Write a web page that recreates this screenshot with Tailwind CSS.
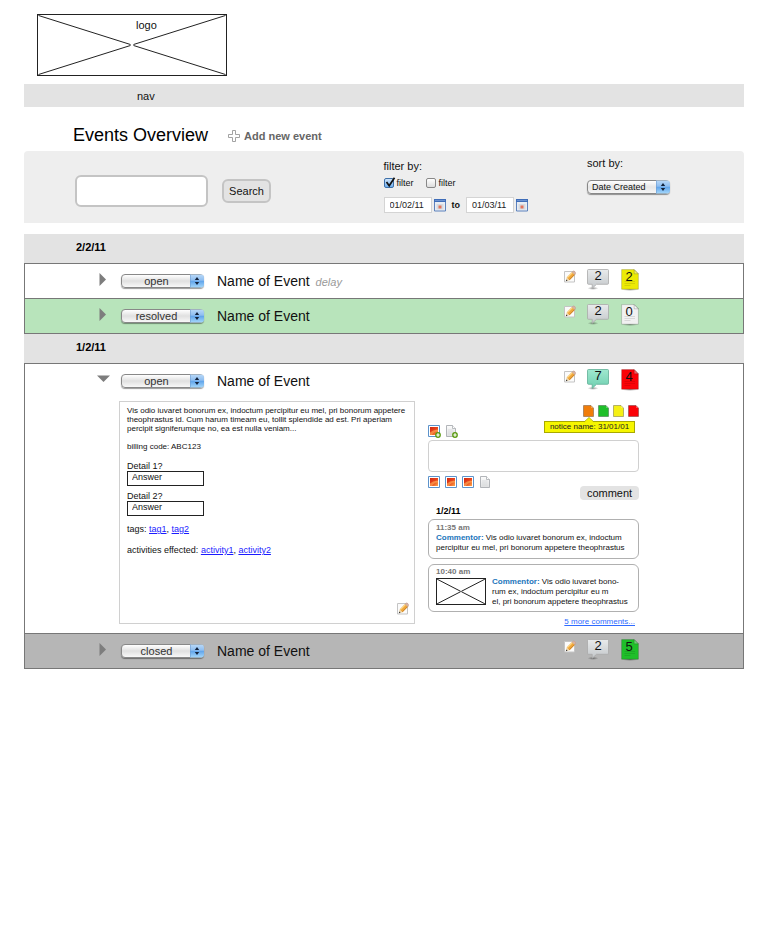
<!DOCTYPE html>
<html lang="en">
<head>
<meta charset="utf-8">
<meta name="viewport" content="width=device-width, initial-scale=1">
<title>Events Overview</title>
<script src="https://cdn.jsdelivr.net/npm/@tailwindcss/browser@4"></script>
</head>
<body class="min-h-screen bg-white px-6 font-['Liberation_Sans',Arial,sans-serif] text-[11px] leading-[14px] text-[#111]">

<!-- Shared icon definitions -->
<svg width="0" height="0" class="absolute" aria-hidden="true">
  <defs>
    <linearGradient id="gGrey" x1="0" y1="0" x2="0" y2="1"><stop offset="0" stop-color="#e9ebec"/><stop offset="1" stop-color="#c3c7ca"/></linearGradient>
    <linearGradient id="gTeal" x1="0" y1="0" x2="0" y2="1"><stop offset="0" stop-color="#9fe8cf"/><stop offset="1" stop-color="#6fcfb0"/></linearGradient>
    <linearGradient id="gBlue" x1="0" y1="0" x2="0" y2="1"><stop offset="0" stop-color="#b9d9f8"/><stop offset=".45" stop-color="#8dbdf0"/><stop offset=".5" stop-color="#5fa3ea"/><stop offset="1" stop-color="#a5d8fb"/></linearGradient>
    <linearGradient id="gPhoto" x1="0" y1="0" x2="1" y2="1"><stop offset="0" stop-color="#cf2a12"/><stop offset=".5" stop-color="#e8431c"/><stop offset="1" stop-color="#fca94a"/></linearGradient>
    <linearGradient id="gPage" x1="0" y1="0" x2="0" y2="1"><stop offset="0" stop-color="#fdfdfd"/><stop offset="1" stop-color="#dedfe0"/></linearGradient>
    <radialGradient id="gShade"><stop offset="0" stop-color="#000" stop-opacity=".4"/><stop offset="1" stop-color="#000" stop-opacity="0"/></radialGradient>
  </defs>
  <symbol id="pencil" viewBox="0 0 12 13">
    <path d="M.5 1.5h10v10.5h-10z" fill="#fbfbfb" stroke="#c4c4c4"/>
    <path d="M1.800 11.300l.9-3.900 2.900 2.800z" fill="#ecd3a4"/><path d="M1.800 11.300l.5-1.800 1.300 1.300z" fill="#333"/>
    <path d="M2.700 7.400L8 2l2.900 2.800-5.300 5.400z" fill="#f0a73a"/>
    <path d="M3.400 7.700L8.700 2.400" stroke="#fbd889" stroke-width="1.100"/><path d="M5.400 9.800l5.200-5.200" stroke="#b9701d" stroke-width=".7"/>
    <path d="M8 2l1-1c1-.7 3.300 1.500 2.600 2.700l-.7 1.100z" fill="#d9b3a0" stroke="#a88" stroke-width=".3"/>
  </symbol>
  <symbol id="bubble" viewBox="0 0 22 21">
    <ellipse cx="6" cy="19.300" rx="5.500" ry="1.600" fill="url(#gShade)" stroke="none"/>
    <path d="M1.500 .5h19q1 0 1 1v12.800q0 1-1 1h-11l-4.300 4v-4h-3.700q-1 0-1-1v-12.800q0-1 1-1z" stroke-width=".8"/>
  </symbol>
  <symbol id="page" viewBox="0 0 18 22">
    <ellipse cx="9" cy="20.500" rx="9" ry="1.500" fill="url(#gShade)" stroke="none"/>
    <path d="M.6 .6h12.600l4.200 4.200v15.400h-16.800z" stroke="#000" stroke-opacity=".22" stroke-width=".8"/>
    <path d="M13.200 .6v4.200h4.200z" fill="#fff" fill-opacity=".35" stroke="#000" stroke-opacity=".3" stroke-width=".6"/>
    <path d="M3.500 12.500h10.500M3.500 14.500h10.500M3.500 16.500h6" stroke="#000" stroke-opacity=".1"/>
  </symbol>
  <symbol id="flag" viewBox="0 0 11 12">
    <path d="M.5 .5h7.500l2.500 2.500v8.500h-10z" stroke="#000" stroke-opacity=".28"/>
    <path d="M8 .5v2.500h2.500z" fill="#fff" fill-opacity=".3"/>
  </symbol>
  <symbol id="photo" viewBox="0 0 12 12">
    <path d="M.5 .5h11v11h-11z" fill="#fff" stroke="#5d93cb"/>
    <path d="M2 2h8v8h-8z" fill="url(#gPhoto)"/>
    <path d="M2 7.500q4-3.500 8-2.500v1.500q-4-.5-6 3.500h-2z" fill="#fdb65c" fill-opacity=".6"/>
  </symbol>
  <symbol id="doc" viewBox="0 0 12 12">
    <path d="M1.500 .5h6l3 3v8h-9z" fill="url(#gPage)" stroke="#a9adb1" stroke-width=".9"/>
    <path d="M7.500 .5v3h3" fill="#fff" stroke="#a9adb1" stroke-width=".8"/>
    <path d="M3 5h5.500M3 7h5.500M3 9h5.500" stroke="#d3d5d7" stroke-width=".7"/>
  </symbol>
  <symbol id="plusdot" viewBox="0 0 6 6">
    <circle cx="3" cy="3" r="2.900" fill="#5a9a10"/><path d="M3 1.300v3.400M1.300 3h3.400" stroke="#fff" stroke-width="1.200"/>
  </symbol>
  <symbol id="calendar" viewBox="0 0 12 13">
    <path d="M.5 .5h11v11.500h-11z" fill="#e9edf3" stroke="#5d82bd"/>
    <path d="M0 0h12v3h-12z" fill="#3f6db8"/><path d="M1 1h10v.7h-10z" fill="#7ea2da"/>
    <path d="M2.500 5h7v5.500h-7z" fill="#d6dae0"/><path d="M4.500 6.500h3v3h-3z" fill="#e3745c"/>
  </symbol>
  <symbol id="stepper" viewBox="0 0 14 13">
    <path d="M0 0h11q3 0 3 3v7q0 3-3 3h-11z" fill="url(#gBlue)"/>
    <path d="M.5 0v13" stroke="#6f9cd0" stroke-opacity=".6"/>
    <path d="M7 2.500l2.200 2.900h-4.400zM7 10.500l2.200-2.900h-4.400z" fill="#13233c"/>
  </symbol>
  <symbol id="crossbox" viewBox="0 0 189 62" preserveAspectRatio="none">
    <path d="M.5 .5L93 30.500M96 30.500L188.500 .5M.5 61.500L93 31.500M96 31.500L188.500 61.500" fill="none" stroke="#222" vector-effect="non-scaling-stroke"/>
  </symbol>
</svg>

<header>
  <div class="pt-[14px] pl-[13px]">
    <a href="#" class="relative block h-[62px] w-[190px] border border-[#222]">
      <svg class="absolute inset-0 h-full w-full" aria-hidden="true"><use href="#crossbox"/></svg>
      <span class="relative block pt-[3px] pl-[98px]">logo</span>
    </a>
  </div>
  <nav class="mt-2 flex h-[23px] items-center bg-[#e3e3e3] pl-[113px]"><a href="#">nav</a></nav>
</header>

<main>
  <div class="flex h-11 items-center gap-5 pt-[11px] pl-[49px]">
    <h1 class="text-[18px] leading-[22px] text-black">Events Overview</h1>
    <button type="button" class="flex items-center gap-1 pt-[2px] font-bold text-[#666]">
      <svg width="12" height="12" viewBox="0 0 12 12" aria-hidden="true"><path d="M4.500 .5h3v4h4v3h-4v4h-3v-4h-4v-3h4z" fill="#fff" stroke="#999" stroke-width=".9"/></svg>
      Add new event
    </button>
  </div>

  <form class="flex h-[72px] items-start rounded-t bg-[#eee] pr-[74px] pl-[51px]">
    <div class="flex items-center gap-[14px] pt-6">
      <input type="search" aria-label="Search events" class="h-8 w-[133px] appearance-none rounded-md border-2 border-[#c4c4c4] bg-white px-2 outline-none">
      <button type="button" class="h-6 w-[49px] rounded-md border-2 border-[#c4c4c4] bg-[#e3e3e3]">Search</button>
    </div>
    <fieldset class="ml-auto pt-2">
      <legend class="contents">filter by:</legend>
      <div class="mt-[3px] flex items-center gap-3 text-[9px]">
        <label class="relative flex items-center gap-[3px]">
          <input type="checkbox" checked class="peer h-[10px] w-[10px] appearance-none rounded-xs border border-[#777] bg-gradient-to-b from-white to-[#ddd] checked:border-[#3d6fa8] checked:from-[#cfe4fa] checked:to-[#6fb0f0]">
          <svg class="absolute top-[1px] left-[1px] hidden peer-checked:block" width="11" height="11" viewBox="0 0 11 11" aria-hidden="true"><path d="M1.500 5l2.700 3.700L9.500 .8" fill="none" stroke="#111" stroke-width="1.700"/></svg>
          filter
        </label>
        <label class="flex items-center gap-[3px]">
          <input type="checkbox" class="h-[10px] w-[10px] appearance-none rounded-xs border border-[#888] bg-gradient-to-b from-white to-[#ddd]">
          filter
        </label>
      </div>
      <div class="mt-[7px] flex items-center text-[9px]">
        <input type="text" value="01/02/11" aria-label="From date" class="h-4 w-12 border border-[#d4d4d4] bg-white pl-[5px] text-[#222]">
        <button type="button" aria-label="Pick start date" class="ml-[2px]"><svg width="12" height="13"><use href="#calendar"/></svg></button>
        <b class="mx-[6px]">to</b>
        <input type="text" value="01/03/11" aria-label="To date" class="h-4 w-12 border border-[#d4d4d4] bg-white pl-[5px] text-[#222]">
        <button type="button" aria-label="Pick end date" class="ml-[2px]"><svg width="12" height="13"><use href="#calendar"/></svg></button>
      </div>
    </fieldset>
    <div class="ml-[59px] pt-[5px]">
      <label for="sort" class="block">sort by:</label>
      <div class="relative mt-[10px] w-[83px]">
        <select id="sort" class="block h-[14px] w-full appearance-none rounded border border-[#888] bg-gradient-to-b from-white via-[#e6e6e6] to-[#f6f6f6] pl-1 text-[9px] leading-[12px] shadow-[0_1px_1px_#0006]"><option>Date Created</option></select>
        <svg class="pointer-events-none absolute top-0 right-0" width="14" height="14"><use href="#stepper"/></svg>
      </div>
    </div>
  </form>

  <h2 class="mt-[11px] flex h-[29px] items-center bg-[#e3e3e3] pb-[3px] pl-[52px] font-bold text-black">2/2/11</h2>
  <ul class="border border-[#777]">
    <li class="flex h-[35px] items-center border-b border-[#777] pr-[104px] pb-[1px] pl-[74px]">
      <button type="button" aria-label="Expand event" class="w-5 pb-[3px]"><svg width="8" height="13" viewBox="0 0 8 13"><path d="M.5 0l6.500 6.500L.5 13z" fill="#7d7d7d"/></svg></button>
      <div class="relative ml-[2px] w-[83px]">
        <select aria-label="Status" class="block h-[14px] w-full appearance-none rounded border border-[#888] bg-gradient-to-b from-white via-[#e0e0e0] to-[#f8f8f8] pr-3 text-center leading-[12px] text-[#333] shadow-[0_1px_1px_#0006] [text-align-last:center]"><option>open</option></select>
        <svg class="pointer-events-none absolute top-0 right-0" width="14" height="14"><use href="#stepper"/></svg>
      </div>
      <h3 class="ml-[13px] text-[14px] leading-[18px]">Name of Event</h3>
      <i class="ml-[6px] pt-[2px] text-[#999]">delay</i>
      <div class="ml-auto flex items-center pb-[2px] text-[13px] leading-[13px]">
        <button type="button" aria-label="Edit event" class="pb-[6px]"><svg width="12" height="13"><use href="#pencil"/></svg></button>
        <button type="button" aria-label="Comments" class="relative ml-[11px] h-[21px] w-[22px]"><svg class="absolute inset-0" width="22" height="21"><use href="#bubble" fill="url(#gGrey)" stroke="#aaa"/></svg><span class="absolute inset-x-0 top-0">2</span></button>
        <button type="button" aria-label="Notices" class="relative ml-3 h-[22px] w-[18px]"><svg class="absolute inset-0" width="18" height="22"><use href="#page" fill="#ecea06"/></svg><span class="absolute inset-x-0 top-[1px] pr-[2px]">2</span></button>
      </div>
    </li>
    <li class="flex h-[34px] items-center bg-[#b8e4bb] pr-[104px] pb-[1px] pl-[74px]">
      <button type="button" aria-label="Expand event" class="w-5 pb-[3px]"><svg width="8" height="13" viewBox="0 0 8 13"><path d="M.5 0l6.500 6.500L.5 13z" fill="#7d7d7d"/></svg></button>
      <div class="relative ml-[2px] w-[83px]">
        <select aria-label="Status" class="block h-[14px] w-full appearance-none rounded border border-[#888] bg-gradient-to-b from-white via-[#e0e0e0] to-[#f8f8f8] pr-3 text-center leading-[12px] text-[#333] shadow-[0_1px_1px_#0006] [text-align-last:center]"><option>resolved</option></select>
        <svg class="pointer-events-none absolute top-0 right-0" width="14" height="14"><use href="#stepper"/></svg>
      </div>
      <h3 class="ml-[13px] text-[14px] leading-[18px]">Name of Event</h3>
      <div class="ml-auto flex items-center pb-[2px] text-[13px] leading-[13px]">
        <button type="button" aria-label="Edit event" class="pb-[6px]"><svg width="12" height="13"><use href="#pencil"/></svg></button>
        <button type="button" aria-label="Comments" class="relative ml-[11px] h-[21px] w-[22px]"><svg class="absolute inset-0" width="22" height="21"><use href="#bubble" fill="url(#gGrey)" stroke="#aaa"/></svg><span class="absolute inset-x-0 top-0">2</span></button>
        <button type="button" aria-label="Notices" class="relative ml-3 h-[22px] w-[18px]"><svg class="absolute inset-0" width="18" height="22"><use href="#page" fill="#f1f1f1"/></svg><span class="absolute inset-x-0 top-[1px] pr-[2px]">0</span></button>
      </div>
    </li>
  </ul>

  <h2 class="flex h-[29px] items-center bg-[#e3e3e3] pb-[3px] pl-[52px] font-bold text-black">1/2/11</h2>
  <ul class="border border-[#777]">
    <li class="border-b border-[#777] pb-[6px]">
      <div class="flex h-[34px] items-center pr-[104px] pb-[1px] pl-[72px]">
        <button type="button" aria-label="Collapse event" class="w-[22px] pb-1"><svg width="13" height="7" viewBox="0 0 13 7"><path d="M0 .5h13L6.500 7z" fill="#7d7d7d"/></svg></button>
        <div class="relative ml-[2px] w-[83px]">
          <select aria-label="Status" class="block h-[14px] w-full appearance-none rounded border border-[#888] bg-gradient-to-b from-white via-[#e0e0e0] to-[#f8f8f8] pr-3 text-center leading-[12px] text-[#333] shadow-[0_1px_1px_#0006] [text-align-last:center]"><option>open</option></select>
          <svg class="pointer-events-none absolute top-0 right-0" width="14" height="14"><use href="#stepper"/></svg>
        </div>
        <h3 class="ml-[13px] text-[14px] leading-[18px]">Name of Event</h3>
        <div class="ml-auto flex items-center pb-[2px] text-[13px] leading-[13px]">
          <button type="button" aria-label="Edit event" class="pb-[6px]"><svg width="12" height="13"><use href="#pencil"/></svg></button>
          <button type="button" aria-label="Comments" class="relative ml-[11px] h-[21px] w-[22px]"><svg class="absolute inset-0" width="22" height="21"><use href="#bubble" fill="url(#gTeal)" stroke="#5fae95"/></svg><span class="absolute inset-x-0 top-0">7</span></button>
          <button type="button" aria-label="Notices" class="relative ml-3 h-[22px] w-[18px]"><svg class="absolute inset-0" width="18" height="22"><use href="#page" fill="#fb0207"/></svg><span class="absolute inset-x-0 top-[1px] pr-[2px]">4</span></button>
        </div>
      </div>

      <div class="mt-[3px] flex items-start gap-[13px] pr-[104px] pl-[94px]">
        <section class="relative min-h-[223px] flex-1 border border-[#d0d0d0] px-[7px] pt-1 text-[9px] leading-[12px]">
          <p class="text-[8px] leading-[9px]">Vis odio iuvaret bonorum ex, indoctum percipitur eu mel, pri bonorum appetere<br>theophrastus id. Cum harum timeam eu, tollit splendide ad est. Pri aperiam<br>percipit signiferumque no, ea est nulla veniam...</p>
          <p class="mt-[9px] text-[8px] leading-[9px]">billing code: ABC123</p>
          <label for="d1" class="mt-[10px] block leading-[10px]">Detail 1?</label>
          <input id="d1" type="text" value="Answer" class="block h-[15px] w-[77px] border border-[#222] px-1 pb-[3px]">
          <label for="d2" class="mt-[5px] block leading-[10px]">Detail 2?</label>
          <input id="d2" type="text" value="Answer" class="block h-[15px] w-[77px] border border-[#222] px-1 pb-[3px]">
          <p class="mt-[7px]">tags: <a href="#" class="text-[#1b1bff] underline">tag1</a>, <a href="#" class="text-[#1b1bff] underline">tag2</a></p>
          <p class="mt-[9px]">activities effected: <a href="#" class="text-[#1b1bff] underline">activity1</a>, <a href="#" class="text-[#1b1bff] underline">activity2</a></p>
          <button type="button" aria-label="Edit details" class="absolute right-[5px] bottom-2"><svg width="12" height="13"><use href="#pencil"/></svg></button>
        </section>

        <section class="relative w-[211px] pt-1 text-[9px] leading-[10px]">
          <div class="flex justify-end gap-1">
            <button type="button" aria-label="Orange notice"><svg width="11" height="12"><use href="#flag" fill="#f07d0a"/></svg></button>
            <button type="button" aria-label="Green notice"><svg width="11" height="12"><use href="#flag" fill="#1fbf2a"/></svg></button>
            <button type="button" aria-label="Yellow notice"><svg width="11" height="12"><use href="#flag" fill="#f5f015"/></svg></button>
            <button type="button" aria-label="Red notice"><svg width="11" height="12"><use href="#flag" fill="#fb0207"/></svg></button>
          </div>
          <div role="tooltip" class="absolute top-5 right-1 h-3 w-[91px] border border-[#a9a900] bg-[#f6f600] text-center text-[8px] leading-[10px] whitespace-nowrap text-[#222]">
            <svg class="absolute -top-[5px] left-[39px]" width="10" height="6" viewBox="0 0 10 6" aria-hidden="true"><path d="M0 5.500L5 .5l5 5z" fill="#f6f600"/><path d="M0 5L5 .5l5 4.500" fill="none" stroke="#a9a900" stroke-width=".8"/></svg>
            notice name: 31/01/01
          </div>
          <div class="mt-2 flex gap-[5px]">
            <button type="button" aria-label="Add photo" class="relative"><svg width="12" height="12"><use href="#photo"/></svg><svg class="absolute -right-[1px] -bottom-[1px]" width="6" height="6"><use href="#plusdot"/></svg></button>
            <button type="button" aria-label="Add document" class="relative"><svg width="12" height="12"><use href="#doc"/></svg><svg class="absolute -right-[1px] -bottom-[1px]" width="6" height="6"><use href="#plusdot"/></svg></button>
          </div>
          <textarea aria-label="Comment" class="mt-[3px] block h-8 w-full resize-none rounded border border-[#d0d0d0] p-1"></textarea>
          <div class="mt-1 flex items-start gap-[5px]">
            <svg width="12" height="12" role="img" aria-label="Photo"><use href="#photo"/></svg>
            <svg width="12" height="12" role="img" aria-label="Photo"><use href="#photo"/></svg>
            <svg width="12" height="12" role="img" aria-label="Photo"><use href="#photo"/></svg>
            <svg width="12" height="12" role="img" aria-label="Document"><use href="#doc"/></svg>
            <button type="button" class="mt-[10px] ml-auto h-[14px] w-[59px] rounded bg-[#e3e3e3] text-[11px] leading-[12px]">comment</button>
          </div>
          <h4 class="mt-[6px] pl-2 font-bold text-black">1/2/11</h4>
          <article class="mt-[3px] h-10 rounded-md border border-[#b0b0b0] pt-[3px] pl-[7px] text-[8px] whitespace-nowrap">
            <time class="block font-bold text-[#777]">11:35 am</time>
            <p><b class="text-[#1b75bb]">Commentor:</b> Vis odio iuvaret bonorum ex, indoctum<br>percipitur eu mel, pri bonorum appetere theophrastus</p>
          </article>
          <article class="mt-[5px] h-12 rounded-md border border-[#b0b0b0] pt-[2px] pl-[7px] text-[8px] whitespace-nowrap">
            <time class="block font-bold text-[#777]">10:40 am</time>
            <div class="flex gap-[6px]">
              <div class="mt-[1px] h-[27px] w-[50px] shrink-0 border border-[#222]"><svg class="h-full w-full" role="img" aria-label="Attached image"><use href="#crossbox"/></svg></div>
              <p><b class="text-[#1b75bb]">Commentor:</b> Vis odio iuvaret bono-<br>rum ex, indoctum percipitur eu m<br>el, pri bonorum appetere theophrastus</p>
            </div>
          </article>
          <a href="#" class="mt-[5px] mr-1 block text-right text-[8px] text-[#2f6bff] underline">5 more comments...</a>
        </section>
      </div>
    </li>
    <li class="flex h-[34px] items-center bg-[#b6b6b6] pr-[104px] pb-[1px] pl-[74px]">
      <button type="button" aria-label="Expand event" class="w-5 pb-[3px]"><svg width="8" height="13" viewBox="0 0 8 13"><path d="M.5 0l6.500 6.500L.5 13z" fill="#7d7d7d"/></svg></button>
      <div class="relative ml-[2px] w-[83px]">
        <select aria-label="Status" class="block h-[14px] w-full appearance-none rounded border border-[#888] bg-gradient-to-b from-white via-[#e0e0e0] to-[#f8f8f8] pr-3 text-center leading-[12px] text-[#333] shadow-[0_1px_1px_#0006] [text-align-last:center]"><option>closed</option></select>
        <svg class="pointer-events-none absolute top-0 right-0" width="14" height="14"><use href="#stepper"/></svg>
      </div>
      <h3 class="ml-[13px] text-[14px] leading-[18px]">Name of Event</h3>
      <div class="ml-auto flex items-center pb-[2px] text-[13px] leading-[13px]">
        <button type="button" aria-label="Edit event" class="pb-[6px]"><svg width="12" height="13"><use href="#pencil"/></svg></button>
        <button type="button" aria-label="Comments" class="relative ml-[11px] h-[21px] w-[22px]"><svg class="absolute inset-0" width="22" height="21"><use href="#bubble" fill="url(#gGrey)" stroke="#aaa"/></svg><span class="absolute inset-x-0 top-0">2</span></button>
        <button type="button" aria-label="Notices" class="relative ml-3 h-[22px] w-[18px]"><svg class="absolute inset-0" width="18" height="22"><use href="#page" fill="#1fbf2a"/></svg><span class="absolute inset-x-0 top-[1px] pr-[2px]">5</span></button>
      </div>
    </li>
  </ul>
</main>
</body>
</html>
